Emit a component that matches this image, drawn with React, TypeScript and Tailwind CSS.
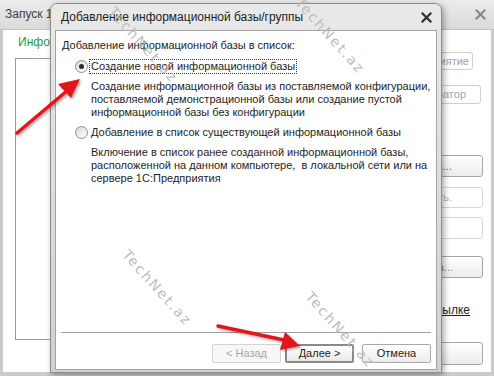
import React from "react";

function CloseIcon({ className }: { className: string }) {
  return (
    <svg width="11" height="11" viewBox="0 0 11 11" className={className}>
      <path d="M1.5 1.5 L9.5 9.5 M9.5 1.5 L1.5 9.5" stroke="currentColor" strokeWidth="2.2" strokeLinecap="square" />
    </svg>
  );
}

function Radio({ checked }: { checked?: boolean }) {
  return (
    <span className="w-[13px] h-[13px] rounded-full border border-[#8f8f8f] bg-gradient-to-br from-[#d9d9d9] to-white flex items-center justify-center shrink-0">
      {checked && <span className="w-[5px] h-[5px] rounded-full bg-[#2b2b2b]" />}
    </span>
  );
}

function Watermark({ className }: { className: string }) {
  return (
    <div
      className={
        "absolute -translate-x-1/2 -translate-y-1/2 rotate-[48deg] whitespace-nowrap font-['DejaVu_Sans',sans-serif] text-[14px] tracking-[2px] text-[#bdbdbd] pointer-events-none " +
        className
      }
    >
      TechNet.az
    </div>
  );
}

export default function App() {
  return (
    <div className="relative w-[494px] h-[376px] overflow-hidden bg-white font-['Liberation_Sans',Arial,sans-serif] text-[11px] leading-[13px] text-[#1e1e1e]">
      {/* окно запуска на фоне */}
      <div className="flex flex-col h-full">
        <div className="h-[30px] shrink-0 flex items-center justify-between pl-[5px] pr-[8px] bg-gradient-to-b from-[#ececec] to-[#dadada] border-b border-[#c4c4c4]">
          <span className="text-[12px] text-[#3c3c3c]">Запуск 1С:Предприятия</span>
          <CloseIcon className="text-[#8a8a8a]" />
        </div>
        <div className="flex-1 flex border-l-[3px] border-r-[3px] border-b-[4px] border-[#cacaca]">
          <div className="flex-1 flex flex-col pl-[12px] pt-[6px]">
            <span className="text-[12px] text-[#1f9a3f] pl-[3px]">Информационные базы</span>
            <div className="mt-[9px] h-[282px] border border-[#9a9a9a] mr-[6px]" />
          </div>
          <div className="w-[55px] flex flex-col">
            <div className="mt-[22px] mr-[18px] h-[18px] flex items-center justify-end overflow-hidden whitespace-nowrap pr-[3px] border border-[#cfcfcf] rounded-[3px] text-[#a3a3a3]">
              1С:Предприятие
            </div>
            <div className="mt-[15px] mr-[10px] h-[19px] flex items-center justify-end overflow-hidden whitespace-nowrap pr-[14px] border border-[#cfcfcf] rounded-[3px] text-[#a3a3a3]">
              Конфигуратор
            </div>
            <div className="mt-[51px] mr-[8px] h-[22px] flex items-center justify-end overflow-hidden whitespace-nowrap pr-[30px] border border-[#a7a7a7] rounded-[3px] bg-gradient-to-b from-white to-[#ececec] text-[#6a6a6a]">
              Добавить...
            </div>
            <div className="mt-[10px] mr-[8px] h-[21px] flex items-center justify-end overflow-hidden whitespace-nowrap pr-[30px] border border-[#d6d6d6] rounded-[3px] text-[#b5b5b5]">
              Изменить.
            </div>
            <div className="mt-[9px] mr-[8px] h-[22px] border border-[#d6d6d6] rounded-[3px]" />
            <div className="mt-[17px] mr-[8px] h-[22px] flex items-center justify-end overflow-hidden whitespace-nowrap pr-[29px] border border-[#a7a7a7] rounded-[3px] bg-gradient-to-b from-white to-[#ececec] text-[#8a8a8a]">
              Настройка...
            </div>
            <div className="mt-[26px] mr-[21px] h-[14px] flex justify-end overflow-hidden whitespace-nowrap text-[12px] underline text-[#1e1e1e]">
              Обновление по ссылке
            </div>
            <div className="mt-[24px] mr-[8px] h-[23px] border border-[#a7a7a7] rounded-[3px] bg-gradient-to-b from-white to-[#ececec]" />
          </div>
        </div>
      </div>

      {/* диалог */}
      <div className="absolute left-[50px] top-[3px] w-[392px] h-[370px] flex flex-col rounded-t-[7px] border border-[#8d8d8d] bg-gradient-to-b from-[#e9e9e9] to-[#d0d0d0] shadow-[2px_2px_6px_rgba(0,0,0,0.35)]">
        <div className="h-[26px] shrink-0 flex items-center justify-between pl-[10px] pr-[9px]">
          <span className="text-[12px] text-[#1e1e1e]">Добавление информационной базы/группы</span>
          <CloseIcon className="text-[#2e2e2e]" />
        </div>
        <div className="flex-1 mx-[4px] mb-[2px] bg-white border border-[#a3a3a3] flex flex-col pl-[6px] whitespace-nowrap">
          <div className="mt-[8px]">Добавление информационной базы в список:</div>
          <div className="mt-[6px] ml-[13px] flex items-center h-[16px]">
            <Radio checked />
            <span className="ml-[1px] px-[1px] border border-dotted border-[#3a3a3a] leading-[13px]">
              Создание новой информационной базы
            </span>
          </div>
          <div className="mt-[6px] ml-[29px]">
            <div>Создание информационной базы из поставляемой конфигурации,</div>
            <div>поставляемой демонстрационной базы или создание пустой</div>
            <div>информационной базы без конфигурации</div>
          </div>
          <div className="mt-[5px] ml-[13px] flex items-center h-[16px]">
            <Radio />
            <span className="ml-[1px] px-[1px] border border-transparent">
              Добавление в список существующей информационной базы
            </span>
          </div>
          <div className="mt-[6px] ml-[29px]">
            <div>Включение в список ранее созданной информационной базы,</div>
            <div>расположенной на данном компьютере,&nbsp; в локальной сети или на</div>
            <div>сервере 1С:Предприятия</div>
          </div>
          <div className="flex-1" />
          <div className="h-px bg-[#a0a0a0] ml-[-1px] mr-[5px]" />
          <div className="mt-[11px] mb-[6px] mr-[5px] flex justify-end items-center">
            <button className="w-[69px] h-[19px] border border-[#d3d3d3] rounded-[2px] bg-[#f7f7f7] text-[#a8a8a8]">
              &lt; Назад
            </button>
            <button className="ml-[4px] w-[69px] h-[19px] border-2 border-[#8a8a8a] rounded-[2px] bg-gradient-to-b from-white to-[#e9e9e9] text-[#1e1e1e]">
              Далее &gt;
            </button>
            <button className="ml-[8px] w-[69px] h-[19px] border border-[#a9a9a9] rounded-[2px] bg-gradient-to-b from-white to-[#ececec] text-[#1e1e1e]">
              Отмена
            </button>
          </div>
        </div>
      </div>

      <Watermark className="left-[143px] top-[45px]" />
      <Watermark className="left-[330px] top-[36px]" />
      <Watermark className="left-[157px] top-[288px]" />
      <Watermark className="left-[340px] top-[330px]" />

      {/* красные стрелки */}
      <svg className="absolute inset-0 pointer-events-none" width="494" height="376" viewBox="0 0 494 376">
        <defs>
          <filter id="sh" x="-20%" y="-20%" width="140%" height="140%">
            <feDropShadow dx="1.5" dy="1.5" stdDeviation="1.2" floodColor="#000" floodOpacity="0.35" />
          </filter>
        </defs>
        <g filter="url(#sh)" fill="#e3171b" stroke="#e3171b">
          <line x1="17" y1="133" x2="68" y2="90" strokeWidth="3.5" strokeLinecap="round" />
          <polygon points="80,79 71,98 58,84" stroke="none" />
          <line x1="218" y1="326" x2="284" y2="340" strokeWidth="3.5" strokeLinecap="round" />
          <polygon points="300,346 280,350 285,332" stroke="none" />
        </g>
      </svg>
    </div>
  );
}
